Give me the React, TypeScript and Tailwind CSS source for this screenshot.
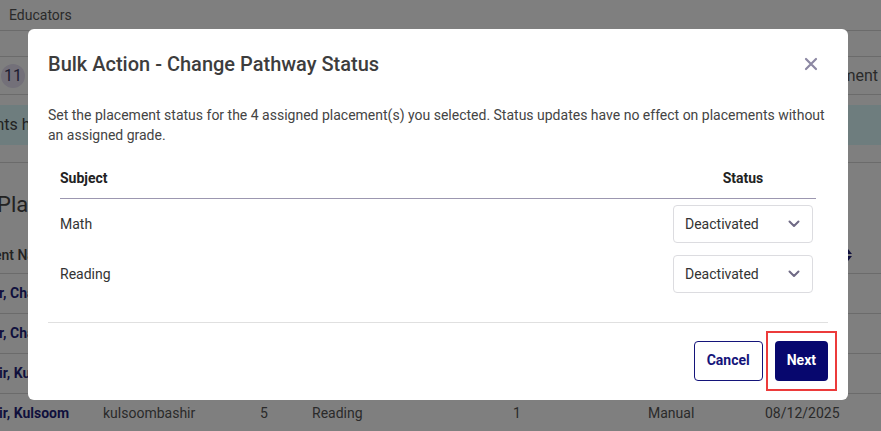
import React from "react";

function Chevron() {
  return (
    <svg width="12" height="8" viewBox="0 0 12 8" fill="none">
      <path d="M1.5 1.5L6 6L10.5 1.5" stroke="#6f6a85" strokeWidth="2" strokeLinecap="round" strokeLinejoin="round" />
    </svg>
  );
}

function StatusSelect() {
  return (
    <div className="flex h-[38px] w-[140px] items-center justify-between rounded-[4px] border border-[#dcdce0] bg-white pl-[11px] pr-[12px] text-[14px] text-[#333333]">
      <span>Deactivated</span>
      <Chevron />
    </div>
  );
}

export default function App() {
  return (
    <div
      className="relative h-[431px] w-full overflow-hidden bg-white text-[#555555]"
      style={{ fontFamily: "Roboto, 'Noto Sans', Arial, sans-serif" }}
    >
      {/* Background page */}
      <div className="flex h-[31px] items-center border-b border-[#d6d6d6] pl-[9px] text-[14px] text-[#555555]">
        Educators
      </div>
      <div className="h-[26px] border-b border-[#d6d6d6]" />
      <div className="flex h-[38px] items-center justify-between border-b border-[#d6d6d6]">
        <div className="ml-[1px] flex h-[24px] w-[24px] items-center justify-center rounded-full bg-[#e6e1f3] text-[16px] text-[#3a3a60]">
          11
        </div>
        <div className="pr-[3px] text-[16px] text-[#555555]">Enrollment</div>
      </div>
      <div className="mt-[10px] flex h-[40px] items-center overflow-hidden bg-[#dcfafc] text-[16px] text-[#444444]">
        <span className="-ml-[13px] whitespace-nowrap">ents have</span>
      </div>
      <div className="mt-[17px] border-b border-[#d6d6d6]" />
      <div className="mt-[28px] overflow-hidden text-[22px] leading-[28px] text-[#444444]">
        <span className="-ml-[3px] whitespace-nowrap">Placements</span>
      </div>
      <div className="mt-[18px] flex h-[37px] items-center justify-between overflow-hidden border-b border-[#d6d6d6] text-[14px] font-medium text-[#444444]">
        <span className="-ml-[6px] whitespace-nowrap">ent Name</span>
        <svg width="8" height="12" viewBox="0 0 8 12" className="mr-[29px]">
          <path d="M4 0L8 5H0Z" fill="#1f1f7a" />
          <path d="M4 12L8 7H0Z" fill="#1f1f7a" />
        </svg>
      </div>
      {["r, Chand", "r, Chand", "ir, Kulsoom"].map((n, i) => (
        <div key={i} className="flex h-[40px] items-center overflow-hidden border-b border-[#d6d6d6] text-[14px] font-bold text-[#1f1f7a]">
          <span className="-ml-[1px] whitespace-nowrap">{n}</span>
        </div>
      ))}
      <div className="flex h-[38px] items-center overflow-hidden text-[14px] text-[#555555]">
        <span className="-ml-[1px] w-[104px] shrink-0 whitespace-nowrap font-bold text-[#1f1f7a]">ir, Kulsoom</span>
        <span className="w-[157px] shrink-0">kulsoombashir</span>
        <span className="w-[52px] shrink-0">5</span>
        <span className="w-[201px] shrink-0">Reading</span>
        <span className="w-[135px] shrink-0">1</span>
        <span className="w-[117px] shrink-0">Manual</span>
        <span className="shrink-0">08/12/2025</span>
      </div>

      {/* Overlay */}
      <div className="absolute inset-0 bg-black/50">
        <div className="ml-[28px] mt-[29px] flex h-[371px] w-[820px] flex-col rounded-[6px] bg-white px-5">
          <div className="flex h-[70px] items-center justify-between">
            <h2 className="text-[20px] font-medium leading-[28px] text-[#3d3d3d]">
              Bulk Action - Change Pathway Status
            </h2>
            <svg width="14" height="14" viewBox="0 0 14 14" className="mr-[10px]">
              <path d="M2 2L12 12M12 2L2 12" stroke="#8c88a3" strokeWidth="2.2" strokeLinecap="round" />
            </svg>
          </div>
          <p className="mt-[6px] text-[14px] leading-[20px] text-[#444444]">
            Set the placement status for the 4 assigned placement(s) you selected. Status updates have no effect on placements without an assigned grade.
          </p>
          <div className="mx-3 mt-[13px]">
            <div className="flex h-[41px] items-center justify-between border-b border-[#9c97b0] text-[14px] font-bold text-[#222222]">
              <span>Subject</span>
              <span className="w-[146px] text-center">Status</span>
            </div>
            {["Math", "Reading"].map((s) => (
              <div key={s} className="flex h-[50px] items-center justify-between text-[14px] text-[#333333]">
                <span>{s}</span>
                <div className="flex w-[146px] justify-center">
                  <StatusSelect />
                </div>
              </div>
            ))}
          </div>
          <div className="mt-[23px] border-b border-[#e0e0e0]" />
          <div className="flex flex-1 items-center justify-end gap-3 pb-[2px]">
            <button className="h-[40px] rounded-[4px] border border-[#14147a] bg-white px-[12px] text-[14px] font-bold text-[#14147a]">
              Cancel
            </button>
            <div className="relative">
              <button className="h-[40px] rounded-[4px] bg-[#07076e] px-[12px] text-[14px] font-bold text-white">
                Next
              </button>
              <div className="pointer-events-none absolute -bottom-[10px] -left-[9px] -right-[9px] -top-[10px] border-2 border-[#ec3b3b]" />
            </div>
          </div>
        </div>
      </div>
    </div>
  );
}
